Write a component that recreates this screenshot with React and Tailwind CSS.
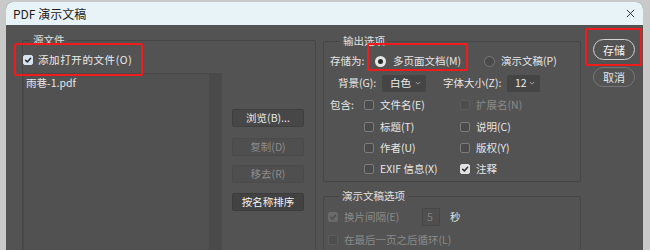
import React from "react";

const FONT = "font-['Noto_Sans_CJK_SC','Noto_Sans',sans-serif]";

function Check({ color }) {
  return (
    <svg viewBox="0 0 10 10" className="w-[8px] h-[8px]">
      <path d="M2 5.3 L4.2 7.4 L8.2 2.8" fill="none" stroke={color} strokeWidth="1.9" strokeLinecap="round" strokeLinejoin="round" />
    </svg>
  );
}

const BOX = {
  off: "bg-[#4b4b4b] border-[#7c7c7c]",
  on: "bg-[#e2e2e2] border-[#e2e2e2]",
  blue: "bg-[#d6e4f1] border-[#d6e4f1]",
  dis: "bg-[#4d4d4d] border-[#5c5c5c]",
  dison: "bg-[#6a6a6a] border-[#6a6a6a]",
};

function Box({ kind = "off" }) {
  const mark = kind === "on" || kind === "blue" ? "#2a2a2a" : kind === "dison" ? "#4e4e4e" : null;
  return (
    <span className={`w-[10px] h-[10px] shrink-0 rounded-[2px] border flex items-center justify-center ${BOX[kind]}`}>
      {mark && <Check color={mark} />}
    </span>
  );
}

function Radio({ on }) {
  return on ? (
    <span className="w-[11px] h-[11px] shrink-0 rounded-full bg-[#e6e6e6] flex items-center justify-center">
      <span className="w-[5px] h-[5px] rounded-full bg-[#2b2b2b]" />
    </span>
  ) : (
    <span className="w-[11px] h-[11px] shrink-0 rounded-full bg-[#4a4a4a] border border-[#7a7a7a]" />
  );
}

function Chevron() {
  return (
    <svg viewBox="0 0 8 5" className="w-[6px] h-[4px]">
      <path d="M1 1 L4 4 L7 1" fill="none" stroke="#bdbdbd" strokeWidth="1" />
    </svg>
  );
}

function Select({ value, w }) {
  return (
    <div className={`${w} h-[17px] rounded-[2px] bg-[#454545] flex items-center justify-between pl-[8px] pr-[5px] text-[#ececec]`}>
      <span>{value}</span>
      <Chevron />
    </div>
  );
}

function Opt({ kind, label, dim, w = "w-[96px]" }) {
  return (
    <div className={`${w} flex items-center gap-[6px]`}>
      <Box kind={kind} />
      <span className={dim ? "text-[#8a8a8a]" : "text-[#e6e6e6]"}>{label}</span>
    </div>
  );
}

function SideButton({ children, dim, dark, className = "" }) {
  return (
    <div
      className={`h-[18px] w-[72px] rounded-[2px] border flex items-center justify-center ${
        dim
          ? "bg-[#4f4f4f] border-[#4a4a4a] text-[#8c8c8c]"
          : dark
          ? "bg-[#424242] border-[#3c3c3c] text-[#f2f2f2]"
          : "bg-[#474747] border-[#3f3f3f] text-[#e8e8e8]"
      } ${className}`}
    >
      {children}
    </div>
  );
}

export default function App() {
  return (
    <div className={`relative w-[650px] h-[250px] overflow-hidden bg-[#c9c9c9] pt-[2px] pl-[6px] ${FONT} text-[10.5px] leading-[14px]`}>
      <div className="w-[637px] h-[248px] rounded-t-[7px] overflow-hidden flex flex-col bg-[#535353]">
        {/* title bar */}
        <div className="h-[23px] shrink-0 bg-[#e8f3f7] flex items-center justify-between pl-[7px] pr-[8px]">
          <span className="text-[12px] text-[#1b1b1b]">PDF 演示文稿</span>
          <svg viewBox="0 0 10 10" className="w-[9px] h-[9px]">
            <path d="M1 1 L9 9 M9 1 L1 9" stroke="#303030" strokeWidth="1.1" />
          </svg>
        </div>

        {/* body */}
        <div className="flex-1 flex items-start pl-[16px] overflow-hidden">
          {/* source files */}
          <fieldset className="mt-[8px] w-[294px] h-[260px] border border-[#464646] rounded-[2px] shrink-0">
            <legend className="ml-[7px] px-[3px] text-[#e0e0e0]">源文件</legend>
            <div className="h-[26px] flex items-center gap-[5px]">
              <Box kind="blue" />
              <span className="text-[#ececec] tracking-[0.6px]">添加打开的文件(O)</span>
            </div>
            <div className="flex items-start">
              <div className="w-[199px] h-[200px] bg-[#515151] border border-[#4a4a4a] flex">
                <div className="flex-1 pl-[2px] pt-[2px] text-[#e6e6e6]">雨巷-1.pdf</div>
                <div className="w-[12px] h-full bg-[#4a4a4a]" />
              </div>
              <div className="ml-[10px] pt-[36px] flex flex-col">
                <SideButton>浏览(B)...</SideButton>
                <SideButton dim className="mt-[11px]">复制(D)</SideButton>
                <SideButton dim className="mt-[9px]">移去(R)</SideButton>
                <SideButton dark className="mt-[10px]">按名称排序</SideButton>
              </div>
            </div>
          </fieldset>

          {/* right column */}
          <div className="ml-[7px] w-[258px] shrink-0 flex flex-col">
            <fieldset className="mt-[9px] border border-[#464646] rounded-[2px] pl-[6px] pb-[2px] text-[#e6e6e6]">
              <legend className="ml-[10px] px-[3px] text-[#e0e0e0]">输出选项</legend>
              <div className="mt-[2px] h-[22px] flex items-center">
                <span className="w-[45px]">存储为:</span>
                <Radio on />
                <span className="ml-[7px] w-[91px]">多页面文档(M)</span>
                <Radio />
                <span className="ml-[6px]">演示文稿(P)</span>
              </div>
              <div className="h-[22px] flex items-center pl-[8px]">
                <span className="w-[44px]">背景(G):</span>
                <Select value="白色" w="w-[44px]" />
                <span className="ml-[17px] w-[64px]">字体大小(Z):</span>
                <Select value="12" w="w-[33px]" />
              </div>
              <div className="h-[22px] flex items-center">
                <span className="w-[34px]">包含:</span>
                <Opt kind="off" label="文件名(E)" />
                <Opt kind="dis" label="扩展名(N)" dim />
              </div>
              <div className="h-[21px] flex items-center pl-[34px]">
                <Opt kind="off" label="标题(T)" />
                <Opt kind="off" label="说明(C)" />
              </div>
              <div className="h-[21px] flex items-center pl-[34px]">
                <Opt kind="off" label="作者(U)" />
                <Opt kind="off" label="版权(Y)" />
              </div>
              <div className="h-[21px] flex items-center pl-[34px]">
                <Opt kind="off" label="EXIF 信息(X)" />
                <Opt kind="on" label="注释" />
              </div>
            </fieldset>

            <fieldset className="mt-[7px] h-[80px] border border-[#464646] rounded-[2px] pl-[4px]">
              <legend className="ml-[11px] px-[3px] text-[#e0e0e0]">演示文稿选项</legend>
              <div className="mt-[3px] h-[22px] flex items-center">
                <Opt kind="dison" label="换片间隔(E)" dim w="w-[94px]" />
                <div className="w-[18px] h-[18px] border border-[#474747] bg-[#4f4f4f] flex items-center pl-[4px] text-[#808080]">5</div>
                <span className="ml-[10px] text-[#e0e0e0]">秒</span>
              </div>
              <div className="h-[23px] flex items-center">
                <Opt kind="dis" label="在最后一页之后循环(L)" dim w="w-[160px]" />
              </div>
            </fieldset>
          </div>

          {/* action buttons */}
          <div className="ml-[12px] mt-[14px] flex flex-col w-[42px] shrink-0">
            <div className="h-[21px] rounded-full border-[1.5px] border-[#d2d2d2] flex items-center justify-center text-[11px] text-[#f2f2f2]">存储</div>
            <div className="mt-[7px] h-[20px] rounded-full border border-[#767676] flex items-center justify-center text-[11px] text-[#e6e6e6]">取消</div>
          </div>
        </div>
      </div>

      {/* red annotation boxes */}
      <div className="absolute left-[14px] top-[43px] w-[129px] h-[33px] border-2 border-[#f01c1c] rounded-[2px]" />
      <div className="absolute left-[367px] top-[43px] w-[101px] h-[28px] border-2 border-[#f01c1c] rounded-[2px]" />
      <div className="absolute left-[585px] top-[28px] w-[57px] h-[38px] border-2 border-[#f01c1c] rounded-[2px]" />
    </div>
  );
}
